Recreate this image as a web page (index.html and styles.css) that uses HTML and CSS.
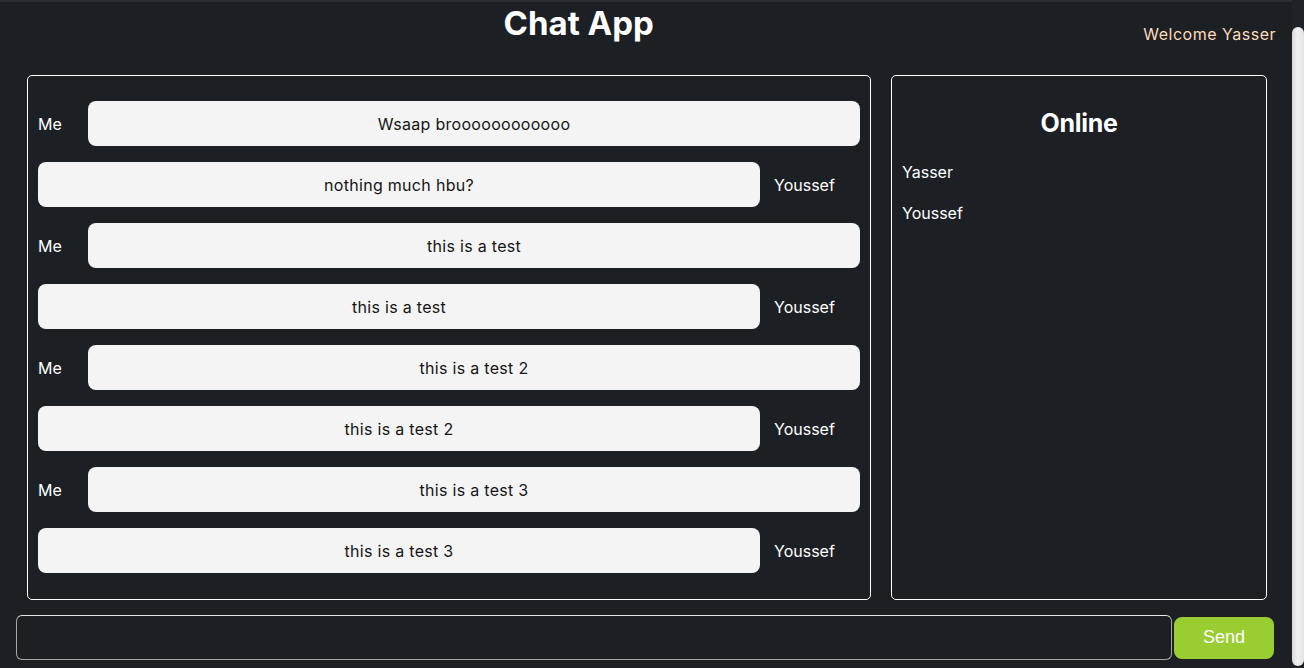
FILE: index.html
```html
<!DOCTYPE html>
<html lang="en">
<head>
<meta charset="utf-8">
<title>Chat App</title>
<link rel="stylesheet" href="styles.css">
</head>
<body>
<div class="page">
  <header class="header">
    <h1 class="title">Chat App</h1>
    <div class="welcome">Welcome Yasser</div>
  </header>
  <main class="main">
    <section class="chat">
      <div class="row mine"><span class="who">Me</span><div class="bubble">Wsaap broooooooooooo</div></div>
      <div class="row theirs"><div class="bubble">nothing much hbu?</div><span class="who">Youssef</span></div>
      <div class="row mine"><span class="who">Me</span><div class="bubble">this is a test</div></div>
      <div class="row theirs"><div class="bubble">this is a test</div><span class="who">Youssef</span></div>
      <div class="row mine"><span class="who">Me</span><div class="bubble">this is a test 2</div></div>
      <div class="row theirs"><div class="bubble">this is a test 2</div><span class="who">Youssef</span></div>
      <div class="row mine"><span class="who">Me</span><div class="bubble">this is a test 3</div></div>
      <div class="row theirs"><div class="bubble">this is a test 3</div><span class="who">Youssef</span></div>
    </section>
    <aside class="online">
      <h2 class="online-title">Online</h2>
      <div class="users">
        <div class="user">Yasser</div>
        <div class="user">Youssef</div>
      </div>
    </aside>
  </main>
  <form class="composer">
    <input class="msg-input" type="text">
    <button class="send" type="button">Send</button>
  </form>
</div>
<div class="scrollbar"><div class="thumb"></div></div>
</body>
</html>
```
FILE: styles.css
```css
html, body {
  height: 100%;
  overflow: hidden;
}
html {
  background: #1c1f24;
}
body {
  margin: 0;
  display: flex;
  font-family: Inter, "Open Sans", sans-serif;
  color: #ffffff;
}
.page {
  flex: 1;
  min-width: 0;
  border-top: 2px solid #2a2e33;
}
.scrollbar {
  width: 12px;
  flex: none;
  display: flex;
  flex-direction: column;
  box-sizing: border-box;
  padding: 27px 0 2px;
  background: #1f2226;
}
.thumb {
  flex: 1;
  border-radius: 6px;
  background: linear-gradient(to right, #d8d8d8, #f1f1f1 45%, #e2e2e2);
}
.header {
  display: flex;
  align-items: flex-start;
  padding-left: 14px;
  padding-right: 16px;
}
.title {
  flex: 1;
  margin: 0;
  padding-top: 1px;
  text-align: center;
  font-size: 33px;
  line-height: 40px;
  font-weight: 700;
}
.welcome {
  padding-top: 20px;
  font-size: 16px;
  line-height: 24px;
  letter-spacing: 0.5px;
  color: #fcdcbc;
}
.main {
  display: grid;
  grid-template-columns: 1fr 376px;
  gap: 20px;
  margin-top: 29px;
  padding: 0 25px 0 27px;
}
.chat {
  display: flex;
  flex-direction: column;
  gap: 16px;
  padding: 25px 10px 26px;
  border: 1px solid #ffffff;
  border-radius: 5px;
}
.row {
  display: flex;
  align-items: center;
  height: 45px;
}
.who {
  font-size: 16px;
  line-height: 24px;
}
.mine .who {
  width: 50px;
  flex: none;
}
.theirs .who {
  width: 100px;
  flex: none;
  padding-left: 14px;
  box-sizing: border-box;
}
.bubble {
  flex: 1;
  height: 45px;
  display: flex;
  align-items: center;
  justify-content: center;
  background: #f4f4f4;
  color: #151515;
  border-radius: 8px;
  font-size: 16px;
  letter-spacing: 0.3px;
}
.online {
  padding: 10px;
  border: 1px solid #ffffff;
  border-radius: 5px;
}
.online-title {
  margin: 19px 0 19px;
  text-align: center;
  font-size: 25px;
  line-height: 36px;
  font-weight: 700;
  letter-spacing: -0.3px;
}
.users {
  display: flex;
  flex-direction: column;
  gap: 17px;
}
.user {
  font-size: 16px;
  line-height: 24px;
}
.composer {
  display: flex;
  align-items: center;
  gap: 2px;
  margin: 15px 0 0;
  padding: 0 18px 0 16px;
}
.msg-input {
  flex: 1;
  height: 45px;
  box-sizing: border-box;
  margin: 0;
  background: transparent;
  border: 1px solid #a8a8a8;
  border-top-color: #e6e6e6;
  border-radius: 6px;
  color: #ffffff;
  outline: none;
}
.send {
  width: 100px;
  height: 42px;
  margin: 0;
  border: none;
  border-radius: 8px;
  background: #9acd32;
  color: #ffffff;
  font-family: "Liberation Sans", Arial, sans-serif;
  font-size: 18px;
}
```
